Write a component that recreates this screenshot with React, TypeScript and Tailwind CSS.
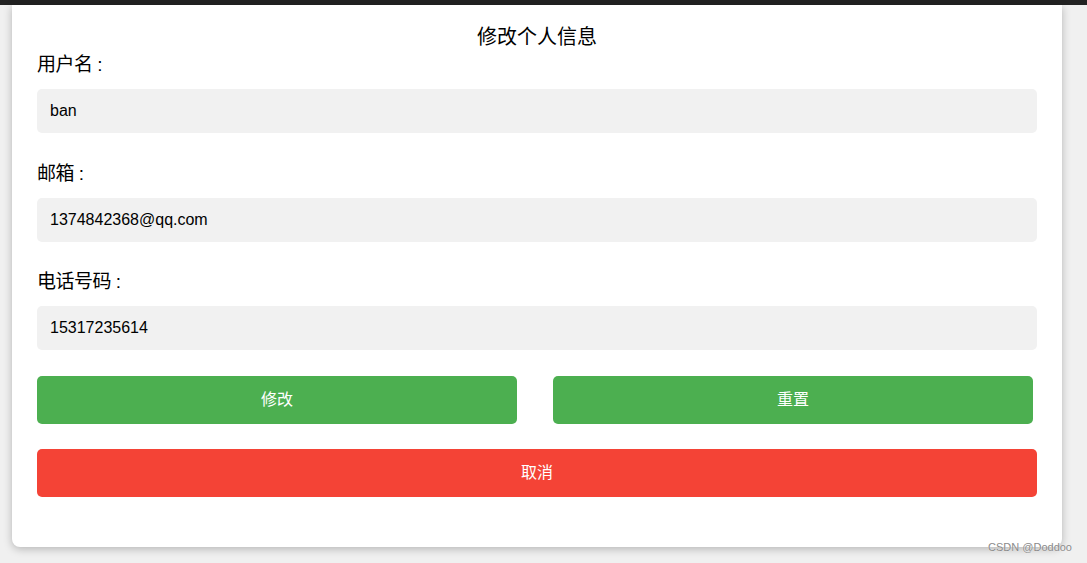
import { useState } from 'react'

const initial = {
  username: 'ban',
  email: '1374842368@qq.com',
  phone: '15317235614',
}

export default function App() {
  const [form, setForm] = useState(initial)

  const fields: { key: keyof typeof initial; label: string }[] = [
    { key: 'username', label: '用户名 :' },
    { key: 'email', label: '邮箱 :' },
    { key: 'phone', label: '电话号码 :' },
  ]

  return (
    <div
      className="relative min-h-[563px] bg-[#f0f0f0] text-black"
      style={{ fontFamily: '"Liberation Sans", "Noto Sans CJK SC", sans-serif' }}
    >
      <div className="h-[5px] bg-[#222222]" />

      <div className="ml-[12px] w-[1050px] rounded-b-[8px] bg-white px-[25px] pt-[18px] pb-[50px] shadow-[0_2px_8px_rgba(0,0,0,0.25)]">
        <h2 className="text-center text-[20px] leading-[28px] font-normal">修改个人信息</h2>

        {fields.map((f, i) => (
          <div key={f.key} className={i === 0 ? '' : 'mt-[26.5px]'}>
            <label className="block text-[19px] leading-[27px] mb-[11px] tracking-[-0.5px]">{f.label}</label>
            <input
              value={form[f.key]}
              onChange={(e) => setForm({ ...form, [f.key]: e.target.value })}
              className="block h-[44px] w-[1000px] rounded-[5px] bg-[#f1f1f1] px-[13px] text-[16px] outline-none"
            />
          </div>
        ))}

        <div className="mt-[26px] flex w-[996px] gap-[36px]">
          <button className="h-[48px] w-[480px] rounded-[5px] bg-[#4caf50] text-[16px] text-white">修改</button>
          <button
            onClick={() => setForm(initial)}
            className="h-[48px] w-[480px] rounded-[5px] bg-[#4caf50] text-[16px] text-white"
          >
            重置
          </button>
        </div>

        <button className="mt-[25px] h-[48px] w-[1000px] rounded-[5px] bg-[#f44336] text-[16px] text-white">
          取消
        </button>
      </div>

      <div className="absolute right-[15px] bottom-[8px] text-[11px] text-[#8a8a8a] [text-shadow:0_0_1px_#fff]">
        CSDN @Doddoo
      </div>
    </div>
  )
}
